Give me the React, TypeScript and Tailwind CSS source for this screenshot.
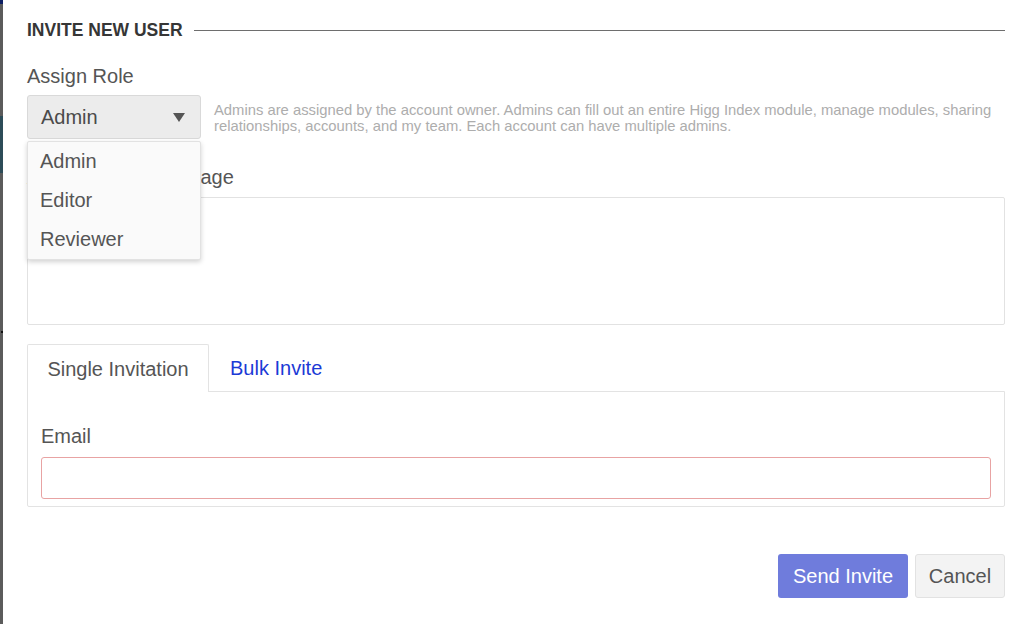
import { useState } from "react";

const roles = ["Admin", "Editor", "Reviewer"];

function BackdropStrip() {
  // sliver of the page behind the modal
  return (
    <div className="relative flex w-[3px] shrink-0 flex-col">
      <div className="h-[4px] bg-[#0d1f63]" />
      <div className="h-[112px] bg-[#5b5b5b]" />
      <div className="h-[57px] bg-[#2d4c58]" />
      <div className="flex-1 bg-[#5b5b5b]" />
      <div className="absolute left-[1px] top-[331px] h-[2px] w-[2px] bg-[#111]" />
    </div>
  );
}

function RoleSelect() {
  const [role, setRole] = useState("Admin");
  const [open, setOpen] = useState(true);

  return (
    <div className="relative w-[174px] shrink-0">
      <button
        type="button"
        onClick={() => setOpen(!open)}
        className="flex h-[44px] w-full items-center justify-between rounded-[3px] border border-[#d9d9d9] bg-[#ececec] pl-[13px] pr-[15px] text-[20px] text-[#4a4a4a]"
      >
        <span>{role}</span>
        <svg width="12" height="9" viewBox="0 0 12 9">
          <path d="M0 0 H12 L6 9 Z" fill="#555" />
        </svg>
      </button>
      {open && (
        <div className="absolute left-0 top-[46px] z-20 flex w-full flex-col rounded-[2px] border border-[#e2e2e2] bg-[#fafafa] shadow-[0_2px_5px_rgba(0,0,0,0.18)]">
          {roles.map(r => (
            <div
              key={r}
              onClick={() => {
                setRole(r);
                setOpen(false);
              }}
              className="flex h-[39px] cursor-pointer items-center pl-[12px] text-[20px] text-[#555] first:h-[38px] last:h-[40px]"
            >
              {r}
            </div>
          ))}
        </div>
      )}
    </div>
  );
}

export default function App() {
  const [tab, setTab] = useState<"single" | "bulk">("single");

  return (
    <div className="flex h-[624px] w-[1024px] overflow-hidden bg-white font-['Liberation_Sans',Arial,sans-serif]">
      <BackdropStrip />
      <div className="flex flex-1 flex-col pl-[24px] pr-[19px] pt-[20px]">
        <div className="flex h-[20px] items-center gap-[11px]">
          <h2 className="text-[17.5px] font-bold uppercase leading-[20px] text-[#363636]">
            Invite New User
          </h2>
          <div className="flex-1 border-t-[1.5px] border-[#6e6e6e]" />
        </div>

        <label className="mt-[24px] h-[24px] text-[20px] leading-[24px] text-[#555]">Assign Role</label>
        <div className="mt-[7px] flex gap-[13px]">
          <RoleSelect />
          <p className="pt-[7px] text-[14.8px] leading-[16px] text-[#adadad]">
            Admins are assigned by the account owner. Admins can fill out an entire Higg Index module, manage
            modules, sharing relationships, accounts, and my team. Each account can have multiple admins.
          </p>
        </div>

        <label className="mt-[26px] h-[24px] text-[20px] leading-[24px] text-[#555]">Add Personal Message</label>
        <textarea className="mt-[8px] h-[128px] w-full resize-none rounded-[2px] border border-[#e2e2e2] p-[12px] text-[16px] outline-none" />

        <div className="mt-[19px] flex">
          <button
            type="button"
            onClick={() => setTab("single")}
            className={
              tab === "single"
                ? "relative z-10 -mb-px flex h-[48px] w-[182px] items-center justify-center rounded-t-[2px] border border-b-0 border-[#e3e3e3] bg-white text-[20px] text-[#555]"
                : "flex h-[47px] w-[182px] items-center justify-center text-[20px] text-[#1c3ad6]"
            }
          >
            Single Invitation
          </button>
          <button
            type="button"
            onClick={() => setTab("bulk")}
            className={
              tab === "bulk"
                ? "relative z-10 -mb-px flex h-[48px] items-center rounded-t-[2px] border border-b-0 border-[#e3e3e3] bg-white px-[20px] text-[20px] text-[#555]"
                : "flex h-[47px] items-center px-[21px] text-[20px] text-[#1c3ad6]"
            }
          >
            Bulk Invite
          </button>
        </div>
        <div className="flex flex-col rounded-b-[2px] border border-[#e3e3e3] px-[13px] pb-[7px] pt-[32px]">
          <label className="h-[24px] text-[20px] leading-[24px] text-[#555]">Email</label>
          <input
            type="email"
            className="mt-[9px] h-[42px] w-full rounded-[3px] border-[1.5px] border-[#e8a3a3] px-[10px] text-[18px] outline-none"
          />
        </div>

        <div className="mt-[47px] flex justify-end gap-[7px]">
          <button
            type="button"
            className="h-[44px] w-[130px] rounded-[3px] bg-[#6f7cdc] text-[20px] text-white"
          >
            Send Invite
          </button>
          <button
            type="button"
            className="h-[44px] w-[90px] rounded-[3px] border border-[#e2e2e2] bg-[#f3f3f3] text-[20px] text-[#555]"
          >
            Cancel
          </button>
        </div>
      </div>
    </div>
  );
}
